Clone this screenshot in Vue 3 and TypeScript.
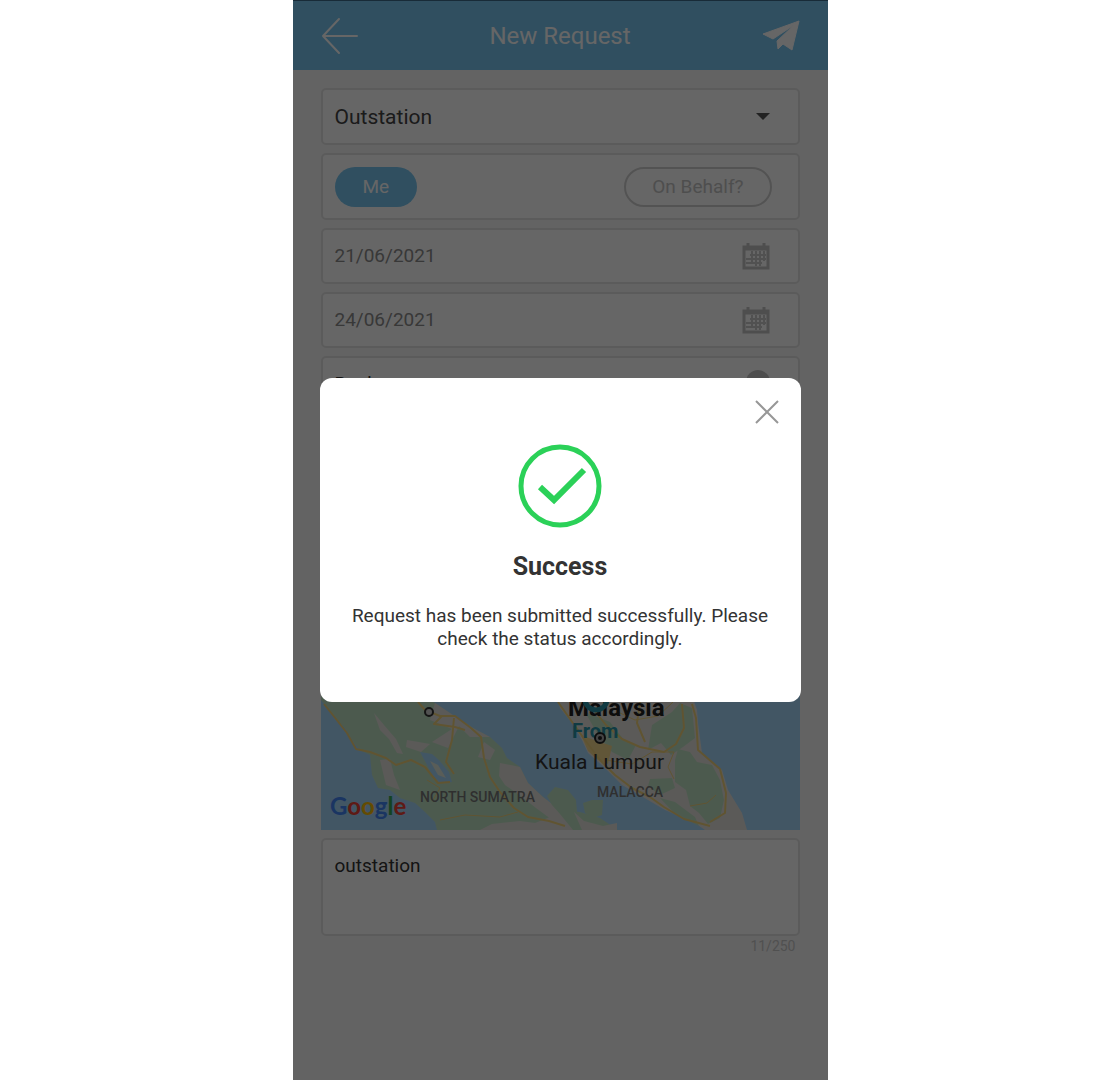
<script setup lang="ts">
import { ref } from 'vue'

const requestType = ref('Outstation')
const onBehalf = ref(false)
const dates = ref([
  { label: 'Start date', value: '21/06/2021' },
  { label: 'End date', value: '24/06/2021' },
])
const place = ref('Bank')
const remarks = ref('outstation')
const showDialog = ref(true)
</script>

<template>
  <div class="phone">
    <header class="bar">
      <button class="icon-button" type="button" aria-label="Back">
        <svg width="38" height="38" viewBox="0 0 38 38" fill="none" stroke="#fff" stroke-width="2" stroke-linecap="round" stroke-linejoin="round">
          <path d="M18 2 2 19l16 17M2 19h34" />
        </svg>
      </button>
      <h1>New Request</h1>
      <button class="icon-button" type="button" aria-label="Send">
        <svg width="38" height="32" viewBox="0 0 38 32" fill="#fff" stroke="#fff" stroke-linejoin="round">
          <path d="M37 1 1 14l10 5L32 5 15 21l1 8 5-5 9 6z" />
        </svg>
      </button>
    </header>

    <main class="form">
      <div class="field type">
        <select v-model="requestType" aria-label="Request type">
          <option>Outstation</option>
        </select>
        <svg class="caret" width="14" height="8" viewBox="0 0 14 8" fill="#555"><path d="M0 0h14L7 7z" /></svg>
      </div>

      <div class="field who">
        <button class="pill active" type="button" @click="onBehalf = false">Me</button>
        <button class="pill outline" type="button" @click="onBehalf = true">On Behalf?</button>
      </div>

      <div v-for="date in dates" :key="date.label" class="field">
        <input v-model="date.value" type="text" :aria-label="date.label" />
        <svg width="28" height="28" viewBox="0 0 28 28" fill="none" stroke="#c4c4c4">
          <path d="M2 5h24v21H2zM2 7h24M6 1v4M22 1v4" stroke-width="3" />
          <path d="M10 9v12M14 9v15M18 9v15M22 9v10M8 13h16M4 17h20M4 21h16" stroke-width="2" stroke="#cacaca" />
        </svg>
      </div>

      <div class="field">
        <input v-model="place" class="dark" type="text" aria-label="Place" />
        <svg width="28" height="28" viewBox="0 0 28 28"><circle cx="16" cy="12" r="12" fill="#c4c4c4" /></svg>
      </div>

      <svg class="map" viewBox="321 420 479 410" preserveAspectRatio="xMidYMax slice" role="img" aria-label="Map">
        <rect x="320" y="420" width="481" height="410" fill="#a6d6fa" />
        <!-- Sumatra -->
        <path fill="#bfe2c4" d="M321 700 335 718 345 728 354 743 360 750 370 755 372 775 378 788 390 790 400 798 415 803 425 812 435 822 437 830H618L600 818 580 812 560 810 543 797 528 783 520 767 507 758 502 748 490 737 473 728 453 715 435 703 400 680 321 640z" />
        <path fill="#e4e2dc" d="M435 703 453 715 473 728 490 737 470 737 459 726 448 748 432 742 452 729 430 720zM484 742 495 750 490 760 478 757zM500 763 520 767 528 783 543 797 560 810 575 830 555 822 536 808 522 797 505 785 499 776zM374 713 384 725 396 739 403 754 397 753 389 739 380 730zM380 760 390 759 394 775 400 790 386 785zM407 740 430 744 421 752 406 747zM480 830 492 824 520 821 535 823 550 817 570 827 590 824 605 830z" />
        <path fill="#a6d6fa" d="M420 752 432 754 439 760 449 772 452 782 440 783 432 775 427 765z" />
        <path fill="#dfe8dc" d="M430 761 438 765 446 778 438 775z" />
        <g fill="none" stroke="#f0d27c" stroke-width="2" stroke-linejoin="round">
          <path d="M324 704 336 719 347 733 356 749 370 752 386 758 396 765 411 760 425 767 438 783 450 782" />
          <path d="M418 702 425 710 440 716 455 716 471 728 481 737 484 758 490 777 500 792 514 808 528 817 549 821 565 826" />
          <path d="M454 718 452 740 446 762 454 774M442 716 434 724 455 727 465 730" />
          <path d="M427 780 440 788 433 800M440 820 465 815 500 817 518 812" stroke-width="1" />
        </g>
        <!-- Riau islands -->
        <path fill="#bfe2c4" d="M547 796 555 787 568 790 576 800 577 812 590 825 600 830H573L560 814 552 805zM583 803 592 800 603 800 602 815 593 818 585 813z" />
        <path fill="#e4e2dc" d="M574 812 584 821 603 826 617 823 617 830H582z" />
        <!-- Malay peninsula -->
        <path fill="#e4e2dc" d="M555 690 560 708 572 723 582 740 588 753 605 768 622 785 648 800 665 810 695 823 705 830H747L742 813 728 790 722 770 702 753 698 723 697 710 690 690z" />
        <path fill="#bfe2c4" d="M585 712 610 722 624 740 636 745 628 760 612 752 598 735zM652 725 672 712 680 703 692 708 695 738 683 747 671 755 661 743 648 750zM678 749 690 752 697 762 712 765 720 780 724 800 720 818 708 824 699 813 690 806 686 790 675 782 675 760zM650 779 672 778 675 788 660 795 648 786zM660 798 675 802 695 817 699 826 675 814z" />
        <path fill="#f3d78c" d="M581 735 594 740 612 746 608 764 598 760 588 751z" />
        <g fill="none" stroke="#f0d27c" stroke-width="2" stroke-linejoin="round">
          <path d="M558 702 570 719 585 740 600 760 615 775 632 788 650 797 664 807 684 819 710 826" />
          <path d="M594 710 606 725 622 739 640 747 664 752 676 744 684 728 682 704M640 702 637 723 645 742M692 704 696 718 698 750 720 769 726 793 725 813 710 822" />
          <path d="M605 760 632 764 652 752 674 752 668 767 674 779M690 806 707 803 716 795M618 712 635 720 658 716 673 702" stroke-width="1" />
        </g>

        <circle cx="429" cy="712" r="4" fill="#ccc" stroke="#333" stroke-width="2" />
        <text x="568" y="716" class="country">Malaysia</text>
        <circle cx="596" cy="699" r="11" fill="none" stroke="#2994a8" stroke-width="5" />
        <text x="572" y="738" class="pin">From</text>
        <circle cx="600" cy="738" r="5" fill="#aaa" stroke="#222" stroke-width="2" />
        <circle cx="600" cy="738" r="2" fill="#222" />
        <text x="535" y="769" class="city">Kuala Lumpur</text>
        <text x="420" y="802" class="region">NORTH SUMATRA</text>
        <text x="597" y="797" class="region">MALACCA</text>
        <text x="330" y="815" class="google"><tspan fill="#4285f4">G</tspan><tspan fill="#ea4335">o</tspan><tspan fill="#fbbc05">o</tspan><tspan fill="#4285f4">g</tspan><tspan fill="#34a853">l</tspan><tspan fill="#ea4335">e</tspan></text>
      </svg>

      <textarea v-model="remarks" aria-label="Remarks"></textarea>
      <p class="counter">11/250</p>
    </main>

    <div v-if="showDialog" class="backdrop">
      <section class="dialog" role="dialog" aria-modal="true" aria-labelledby="dialog-title">
        <button class="close" type="button" aria-label="Close" @click="showDialog = false">
          <svg width="24" height="24" viewBox="0 0 24 24" stroke="#979797" stroke-width="2"><path d="M1 1 23 23M23 1 1 23" /></svg>
        </button>
        <svg class="tick" width="84" height="84" viewBox="0 0 84 84" fill="none" stroke="#2bd158">
          <circle cx="42" cy="42" r="39" stroke-width="5" />
          <path d="M22 43 36 56 66 26" stroke-width="6" />
        </svg>
        <h2 id="dialog-title">Success</h2>
        <p>Request has been submitted successfully. Please check the status accordingly.</p>
      </section>
    </div>
  </div>
</template>

<style>
body {
  margin: 0;
  background: #fff;
}
</style>

<style scoped>
.phone {
  position: relative;
  box-sizing: border-box;
  max-width: 535px;
  min-height: 100vh;
  margin: 0 auto;
  background: #f8f8f8;
  font-family: Roboto, "Liberation Sans", sans-serif;
  color: #333;
}

.phone * {
  box-sizing: border-box;
}

button,
input,
select,
textarea {
  font: inherit;
  color: inherit;
  background: none;
  border: 0;
  padding: 0;
  margin: 0;
  outline: none;
}

.bar {
  display: flex;
  align-items: center;
  justify-content: space-between;
  height: 70px;
  padding: 0 28px;
  background: #78c6f0;
  border-top: 1px solid #3c6c8c;
  color: #fff;
}

.icon-button,
.close {
  display: flex;
}

h1 {
  margin: 0;
  font-size: 24px;
  font-weight: 400;
  line-height: 32px;
}

.form {
  display: flex;
  flex-direction: column;
  gap: 8px;
  padding: 18px 28px 0;
}

.field {
  display: flex;
  align-items: center;
  height: 56px;
  padding: 0 28px 0 12px;
  border: 2px solid #e4e4e4;
  border-radius: 5px;
  background: #fff;
}

.field select,
.field input {
  flex: 1;
  min-width: 0;
  appearance: none;
  font-size: 19px;
  line-height: 24px;
}

.field select {
  font-size: 21px;
  color: #444;
}

.field input {
  color: #8c8c8c;
}

.field input.dark {
  color: #333;
}

.type {
  height: 57px;
}

.who {
  height: 67px;
  justify-content: space-between;
  padding-right: 26px;
}

.pill {
  height: 40px;
  padding: 0 28px;
  border-radius: 20px;
  font-size: 19px;
}

.active {
  background: #78c6f0;
  color: #fff;
}

.outline {
  padding: 0 26px;
  border: 2px solid #d0d0d0;
  color: #c4c4c4;
}

.map {
  display: block;
  width: 100%;
  height: 410px;
}

.country {
  font-size: 24px;
  font-weight: 700;
  fill: #222;
}

.pin {
  font-size: 20px;
  font-weight: 700;
  fill: #2994a8;
}

.city {
  font-size: 21px;
  fill: #333;
}

.region {
  font-size: 14px;
  font-weight: 500;
  fill: #777;
}

.google {
  font-family: Lato, sans-serif;
  font-size: 24px;
  font-weight: 700;
}

textarea {
  display: block;
  width: 100%;
  height: 98px;
  padding: 14px 12px;
  border: 2px solid #e4e4e4;
  border-radius: 5px;
  background: #fff;
  font-size: 19px;
  line-height: 24px;
  resize: none;
}

.counter {
  margin: -6px 4px 0;
  font-size: 14px;
  line-height: 16px;
  text-align: right;
  color: #c8c8c8;
}

.backdrop {
  position: absolute;
  inset: 0;
  display: flex;
  align-items: center;
  justify-content: center;
  padding: 0 27px;
  background: rgba(0, 0, 0, 0.6);
}

.dialog {
  display: flex;
  flex-direction: column;
  align-items: center;
  width: 100%;
  padding: 22px 22px 52px;
  border-radius: 12px;
  background: #fff;
  text-align: center;
}

.close {
  align-self: flex-end;
}

.tick {
  margin-top: 20px;
}

h2 {
  margin: 23px 0 21px;
  font-size: 25px;
  font-weight: 700;
  line-height: 32px;
}

.dialog p {
  margin: 0;
  font-size: 19px;
  line-height: 23px;
}
</style>
